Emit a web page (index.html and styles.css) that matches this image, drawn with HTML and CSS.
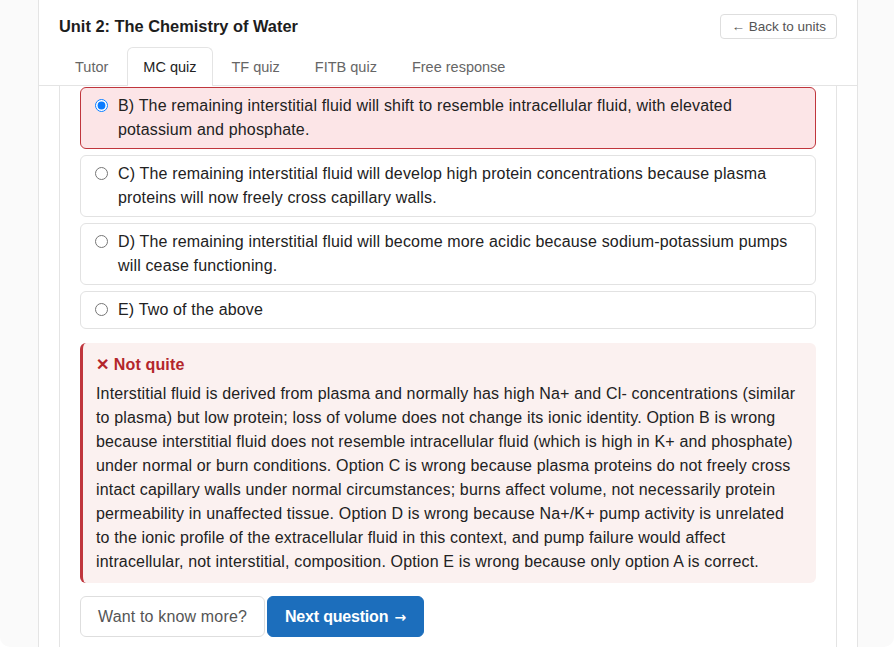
FILE: index.html
```html
<!DOCTYPE html>
<html lang="en">
<head>
    <meta charset="UTF-8">
    <meta name="viewport" content="width=device-width, initial-scale=1.0">
    <title>Unit 2: The Chemistry of Water</title>
    <link rel="stylesheet" href="styles.css">
</head>
<body>
    <div class="shell">
        <div class="column">
            <header class="unit-head">
                <h1>Unit 2: The Chemistry of Water</h1>
                <button class="back-btn">&larr; Back to units</button>
            </header>

            <nav class="tabs">
                <span class="tab">Tutor</span>
                <span class="tab active">MC quiz</span>
                <span class="tab">TF quiz</span>
                <span class="tab">FITB quiz</span>
                <span class="tab">Free response</span>
            </nav>

            <section class="panel">
                <div class="choices">
                    <label class="choice wrong">
                        <input type="radio" name="answer" checked>
                        <span>B) The remaining interstitial fluid will shift to resemble intracellular fluid, with elevated potassium and phosphate.</span>
                    </label>
                    <label class="choice">
                        <input type="radio" name="answer">
                        <span>C) The remaining interstitial fluid will develop high protein concentrations because plasma proteins will now freely cross capillary walls.</span>
                    </label>
                    <label class="choice">
                        <input type="radio" name="answer">
                        <span>D) The remaining interstitial fluid will become more acidic because sodium-potassium pumps will cease functioning.</span>
                    </label>
                    <label class="choice">
                        <input type="radio" name="answer">
                        <span>E) Two of the above</span>
                    </label>
                </div>

                <div class="feedback">
                    <div class="feedback-title">&#x2715; Not quite</div>
                    <p>Interstitial fluid is derived from plasma and normally has high Na+ and Cl- concentrations (similar to plasma) but low protein; loss of volume does not change its ionic identity. Option B is wrong because interstitial fluid does not resemble intracellular fluid (which is high in K+ and phosphate) under normal or burn conditions. Option C is wrong because plasma proteins do not freely cross intact capillary walls under normal circumstances; burns affect volume, not necessarily protein permeability in unaffected tissue. Option D is wrong because Na+/K+ pump activity is unrelated to the ionic profile of the extracellular fluid in this context, and pump failure would affect intracellular, not interstitial, composition. Option E is wrong because only option A is correct.</p>
                </div>

                <div class="actions">
                    <button class="btn-more">Want to know more?</button>
                    <button class="btn-next">Next question <span class="arrow">&rarr;</span></button>
                </div>
            </section>
        </div>
    </div>
</body>
</html>
```

FILE: styles.css
```css
* {
    box-sizing: border-box;
}

body {
    margin: 0;
    background-color: #fff;
    font-family: "Liberation Sans", Arial, sans-serif;
    color: #222;
}

.shell {
    width: 894px;
    height: 647px;
    padding: 0 36px 0 38px;
    background-color: #fafafa;
    border-radius: 0 0 10px 10px;
    overflow: hidden;
}

.column {
    height: 100%;
    background-color: #fff;
    border-left: 1px solid #e4e4e4;
    border-right: 1px solid #e4e4e4;
    display: flex;
    flex-direction: column;
}

.unit-head {
    display: flex;
    justify-content: space-between;
    align-items: center;
    padding: 14px 20px 8px;
}

.unit-head h1 {
    margin: 0;
    font-size: 16.4px;
    font-weight: 700;
    color: #1d1d1d;
}

.back-btn {
    height: 25px;
    padding: 0 10px;
    font-family: inherit;
    font-size: 13.5px;
    color: #555;
    background-color: #fff;
    border: 1px solid #dedede;
    border-radius: 4px;
}

/* tab strip */
.tabs {
    display: flex;
    gap: 3px;
    padding: 0 20px;
    border-bottom: 1px solid #e4e4e4;
}

.tab {
    height: 38px;
    line-height: 38px;
    padding: 0 15px;
    font-size: 14.5px;
    color: #666;
    border: 1px solid transparent;
    border-bottom: none;
    border-radius: 6px 6px 0 0;
    margin-bottom: -1px;
}

.tab.active {
    color: #222;
    background-color: #fff;
    border-color: #e4e4e4;
    height: 39px;
}

.panel {
    flex: 1;
    margin: 0 20px;
    padding: 1px 20px 0;
    border-left: 1px solid #e4e4e4;
    border-right: 1px solid #e4e4e4;
    letter-spacing: 0.16px;
}

.choices {
    display: flex;
    flex-direction: column;
    gap: 6px;
}

.choice {
    display: flex;
    align-items: flex-start;
    padding: 6px 14px;
    font-size: 16px;
    line-height: 24px;
    border: 1px solid #e2e2e2;
    border-radius: 6px;
    background-color: #fff;
}

.choice input {
    margin: 5px 10px 0 0;
    width: 13px;
    height: 13px;
    flex-shrink: 0;
    accent-color: #0b7bff;
}

.choice.wrong {
    background-color: #fce5e7;
    border-color: #c0363d;
}

.feedback {
    margin-top: 14px;
    padding: 10px 16px 9px 13px;
    background-color: #fbf1f0;
    border-left: 3px solid #c0363d;
    border-radius: 6px;
    font-size: 16px;
    line-height: 24px;
}

.feedback-title {
    font-weight: 700;
    color: #b3262b;
}

.feedback p {
    margin: 5px 0 0;
    color: #222;
}

.actions {
    display: flex;
    gap: 2px;
    margin-top: 13px;
}

.actions button {
    height: 41px;
    padding: 0 17px;
    font-family: inherit;
    font-size: 16px;
    letter-spacing: 0.16px;
    border-radius: 6px;
    cursor: pointer;
}

.btn-more {
    color: #555;
    background-color: #fff;
    border: 1px solid #dedede;
}

.btn-next {
    color: #fff;
    font-weight: 700;
    background-color: #1c6ebc;
    border: 1px solid #1c6ebc;
}

.actions .btn-next {
    letter-spacing: -0.2px;
}

.btn-next .arrow {
    margin-left: 2px;
    font-family: "DejaVu Sans", sans-serif;
    font-size: 14px;
}
```
